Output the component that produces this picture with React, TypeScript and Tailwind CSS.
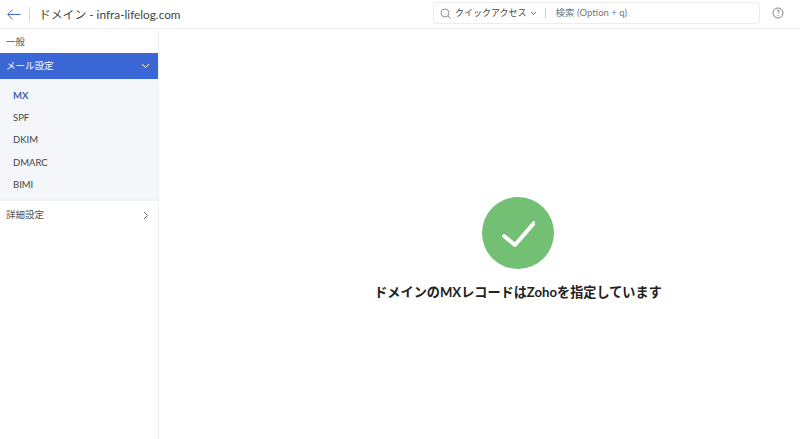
const font = { fontFamily: "Lato, 'Noto Sans CJK JP', sans-serif" };

const subItems = ["SPF", "DKIM", "DMARC", "BIMI"];

const App = () => {
  return (
    <div className="w-[800px] h-[439px] bg-white flex flex-col overflow-hidden text-[#333] font-['Lato','Noto_Sans_CJK_JP',sans-serif]">
      <header className="h-[29px] shrink-0 flex items-center border-b border-[#f0f0f0]">
        <svg width="14" height="11" viewBox="0 0 14 11" fill="none" stroke="#3d68c9" strokeWidth="1" className="ml-[7px]">
          <path d="M13.5 5.5H.8M5.5.7.8 5.5l4.7 4.8" />
        </svg>
        <div className="w-px h-[15px] bg-[#d9d9d9] ml-[8px]" />
        <div className="ml-[9px] mt-[1px] text-[11.8px] text-[#444]">ドメイン - infra-lifelog.com</div>
        <div className="ml-auto w-[327px] h-[22px] mt-[-2px] border border-[#ececec] rounded-[3px] flex items-center">
          <svg width="11" height="11" viewBox="0 0 11 11" fill="none" stroke="#777" strokeWidth="0.8" className="ml-[6px]">
            <circle cx="5" cy="5" r="4" />
            <path d="M8 8l2.5 2.5" />
          </svg>
          <span className="ml-[4px] text-[9px] text-[#444]">クイックアクセス</span>
          <svg width="7" height="5" viewBox="0 0 7 5" fill="none" stroke="#555" strokeWidth="0.8" className="ml-[3px]">
            <path d="M1 1l2.5 2.5L6 1" />
          </svg>
          <div className="w-px h-[10px] bg-[#cccccc] ml-[8px]" />
          <span className="ml-[10px] text-[9.5px] text-[#777]">検索 (Option + q)</span>
        </div>
        <svg width="12" height="12" viewBox="0 0 12 12" fill="none" className="ml-[12px] mr-[16px] mt-[-2px]">
          <circle cx="6" cy="6" r="5" stroke="#666" strokeWidth="0.8" />
          <text x="6" y="8.5" textAnchor="middle" fontSize="7" fill="#555" style={font}>?</text>
        </svg>
      </header>
      <div className="flex flex-1 min-h-0">
        <aside className="w-[159px] shrink-0 border-r border-[#f0f0f0] flex flex-col">
          <div className="h-[24px] flex items-center pl-[6px] pt-[2px] text-[9.5px] text-[#555]">一般</div>
          <div className="h-[26px] bg-[#3b66d6] text-white flex items-center justify-between pl-[6px] pr-[8px] text-[9.5px]">
            <span>メール設定</span>
            <svg width="9" height="6" viewBox="0 0 9 6" fill="none" stroke="#ffffff" strokeWidth="1">
              <path d="M1 1l3.5 3.5L8 1" />
            </svg>
          </div>
          <div className="h-[122px] bg-[#f4f6f9] border-b-2 border-[#eef0f3] flex flex-col pt-[6px] pl-[13px] text-[9.5px]">
            <div className="h-[22.2px] flex items-center text-[#3b5fb5] font-bold">MX</div>
            {subItems.map((item) => (
              <div key={item} className="h-[22.2px] flex items-center text-[#444]">{item}</div>
            ))}
          </div>
          <div className="h-[28px] flex items-center justify-between pl-[6px] pr-[9px] text-[9.5px] text-[#555]">
            <span>詳細設定</span>
            <svg width="6" height="9" viewBox="0 0 6 9" fill="none" stroke="#666" strokeWidth="1">
              <path d="M1 1l3.5 3.5L1 8" />
            </svg>
          </div>
        </aside>
        <main className="flex-1 flex flex-col items-center pt-[168px] pl-[77px]">
          <div className="w-[72px] h-[72px] rounded-full bg-[#73bf73] flex items-center justify-center">
            <svg width="34" height="30" viewBox="0 0 34 30" fill="none" stroke="#ffffff" strokeWidth="4" strokeLinecap="round" strokeLinejoin="round">
              <path d="M3 18l11 9L33 5" />
            </svg>
          </div>
          <div className="mt-[14px] text-[13.15px] font-bold text-[#222]">ドメインのMXレコードはZohoを指定しています</div>
        </main>
      </div>
    </div>
  );
};

export default App;
